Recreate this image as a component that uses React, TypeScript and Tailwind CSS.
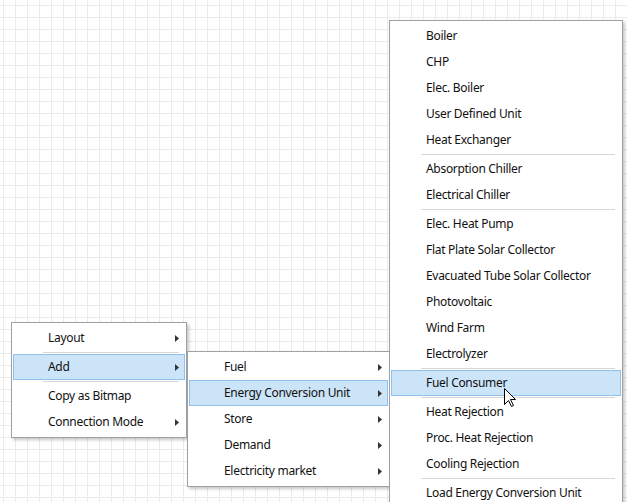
import React from "react";

type Entry = { label: string; sub?: boolean; active?: boolean } | "sep";

const Arrow = () => (
  <svg width="4" height="7" viewBox="0 0 4 7" className="absolute right-[5px] top-[9px]">
    <path d="M0 0 L4 3.5 L0 7 Z" fill="#333" />
  </svg>
);

function Menu({ items, className }: { items: Entry[]; className: string }) {
  return (
    <div
      className={
        "absolute bg-white border border-[#a0a0a0] py-[2px] shadow-[2px_2px_3px_rgba(0,0,0,0.22)] " +
        className
      }
    >
      {items.map((it, i) =>
        it === "sep" ? (
          <div key={i} className="h-[3px] flex items-center pl-[31px] pr-[7px]">
            <div className="h-px w-full bg-[#d7d7d7]" />
          </div>
        ) : (
          <div
            key={i}
            className={
              "relative mx-px h-[26px] flex items-center pl-[34px] border whitespace-nowrap " +
              (it.active ? "bg-[#cce4f7] border-[#8fc0ee]" : "border-transparent")
            }
          >
            <span>{it.label}</span>
            {it.sub && <Arrow />}
          </div>
        )
      )}
    </div>
  );
}

export default function App() {
  const m1: Entry[] = [
    { label: "Layout", sub: true },
    "sep",
    { label: "Add", sub: true, active: true },
    "sep",
    { label: "Copy as Bitmap" },
    { label: "Connection Mode", sub: true },
  ];
  const m2: Entry[] = [
    { label: "Fuel", sub: true },
    { label: "Energy Conversion Unit", sub: true, active: true },
    { label: "Store", sub: true },
    { label: "Demand", sub: true },
    { label: "Electricity market", sub: true },
  ];
  const m3: Entry[] = [
    { label: "Boiler" },
    { label: "CHP" },
    { label: "Elec. Boiler" },
    { label: "User Defined Unit" },
    { label: "Heat Exchanger" },
    "sep",
    { label: "Absorption Chiller" },
    { label: "Electrical Chiller" },
    "sep",
    { label: "Elec. Heat Pump" },
    { label: "Flat Plate Solar Collector" },
    { label: "Evacuated Tube Solar Collector" },
    { label: "Photovoltaic" },
    { label: "Wind Farm" },
    { label: "Electrolyzer" },
    "sep",
    { label: "Fuel Consumer", active: true },
    "sep",
    { label: "Heat Rejection" },
    { label: "Proc. Heat Rejection" },
    { label: "Cooling Rejection" },
    "sep",
    { label: "Load Energy Conversion Unit" },
  ];
  return (
    <div
      className="relative w-[627px] h-[502px] overflow-hidden bg-white bg-[linear-gradient(to_right,#ebebeb_1px,transparent_1px),linear-gradient(to_bottom,#ebebeb_1px,transparent_1px)] bg-[length:12px_12px] bg-[position:3px_5px] text-[12px] tracking-[-0.3px] text-[#111] [font-family:'Segoe_UI','Noto_Sans',sans-serif]"
    >
      <Menu items={m1} className="left-[11px] top-[322px] w-[176px]" />
      <Menu items={m2} className="left-[187px] top-[351px] w-[203px]" />
      <Menu items={m3} className="left-[389px] top-[20px] w-[234px]" />
      <svg
        width="13"
        height="20"
        viewBox="0 0 13 20"
        className="absolute left-[504px] top-[388px]"
      >
        <path
          d="M0.5 0.5 L0.5 16.5 L4.5 12.5 L7.5 18.5 L9.5 17.5 L6.5 11.5 L11.5 11.5 Z"
          fill="#fff"
          stroke="#000"
          strokeWidth="1"
          strokeLinejoin="miter"
        />
      </svg>
    </div>
  );
}
